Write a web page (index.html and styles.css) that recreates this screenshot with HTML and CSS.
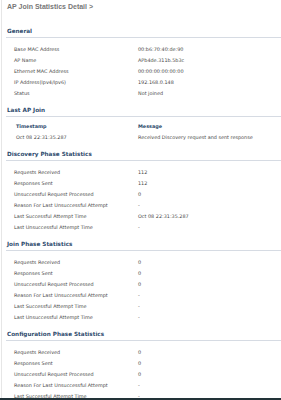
FILE: index.html
```html
<!DOCTYPE html>
<html lang="en">
<head>
  <meta charset="UTF-8" />
  <meta name="viewport" content="width=device-width, initial-scale=1.0"/>
  <title>AP Join Statistics Detail</title>
  <link rel="stylesheet" href="styles.css">
</head>
<body>
  <div class="page">
    <h1 class="page-title">AP Join Statistics Detail &gt;</h1>

    <div class="section section-first">
      <h2>General</h2>
      <div class="rows">
        <div class="row"><span>Base MAC Address</span><span>00:b6:70:40:de:90</span></div>
        <div class="row"><span>AP Name</span><span>APb4de.311b.5b3c</span></div>
        <div class="row"><span>Ethernet MAC Address</span><span>00:00:00:00:00:00</span></div>
        <div class="row"><span>IP Address(Ipv4/Ipv6)</span><span>192.168.0.148</span></div>
        <div class="row"><span>Status</span><span>Not joined</span></div>
      </div>
    </div>

    <div class="section">
      <h2>Last AP Join</h2>
      <div class="join-table">
        <div class="row join-head"><span>Timestamp</span><span>Message</span></div>
        <div class="row join-row"><span>Oct 08 22:31:35.287</span><span>Received Discovery request and sent response</span></div>
      </div>
    </div>

    <div class="section">
      <h2>Discovery Phase Statistics</h2>
      <div class="rows">
        <div class="row"><span>Requests Received</span><span>112</span></div>
        <div class="row"><span>Responses Sent</span><span>112</span></div>
        <div class="row"><span>Unsuccessful Request Processed</span><span>0</span></div>
        <div class="row"><span>Reason For Last Unsuccessful Attempt</span><span>-</span></div>
        <div class="row"><span>Last Successful Attempt Time</span><span>Oct 08 22:31:35.287</span></div>
        <div class="row"><span>Last Unsuccessful Attempt Time</span><span>-</span></div>
      </div>
    </div>

    <div class="section">
      <h2>Join Phase Statistics</h2>
      <div class="rows">
        <div class="row"><span>Requests Received</span><span>0</span></div>
        <div class="row"><span>Responses Sent</span><span>0</span></div>
        <div class="row"><span>Unsuccessful Request Processed</span><span>0</span></div>
        <div class="row"><span>Reason For Last Unsuccessful Attempt</span><span>-</span></div>
        <div class="row"><span>Last Successful Attempt Time</span><span>-</span></div>
        <div class="row"><span>Last Unsuccessful Attempt Time</span><span>-</span></div>
      </div>
    </div>

    <div class="section">
      <h2>Configuration Phase Statistics</h2>
      <div class="rows">
        <div class="row"><span>Requests Received</span><span>0</span></div>
        <div class="row"><span>Responses Sent</span><span>0</span></div>
        <div class="row"><span>Unsuccessful Request Processed</span><span>0</span></div>
        <div class="row"><span>Reason For Last Unsuccessful Attempt</span><span>-</span></div>
        <div class="row"><span>Last Successful Attempt Time</span><span>-</span></div>
        <div class="row"><span>Last Unsuccessful Attempt Time</span><span>-</span></div>
      </div>
    </div>
  </div>

  <div class="footer-bar"></div>
</body>
</html>
```

FILE: styles.css
```css
body {
  margin: 0;
  background: #fff;
  font-family: "DejaVu Sans", Verdana, sans-serif;
  font-size: 4.9px;
  color: #4a4a4a;
}

.page {
  border-left: 1px solid #e6e6e6;
  margin-left: 1px;
  padding-left: 4px;
  min-height: 400px;
  box-sizing: border-box;
}

.page-title {
  font-family: "Liberation Sans", Arial, sans-serif;
  font-size: 7px;
  font-weight: bold;
  color: #777;
  line-height: 10px;
  margin: 0;
  padding: 2px 0 0 1px;
}

.section {
  margin-top: 6px;
}

.section-first {
  margin-top: 14px;
}

.section h2 {
  font-size: 5.7px;
  font-weight: bold;
  color: #2e4b6d;
  line-height: 10px;
  margin: 0;
  padding: 0 0 1px 1px;
  border-bottom: 1px solid #d6dbe3;
}

.rows {
  margin-top: 6px;
}

.row {
  display: grid;
  grid-template-columns: 124px 1fr;
  height: 11px;
  line-height: 11px;
  padding-left: 8px;
  white-space: nowrap;
}

.join-table {
  margin-top: 4px;
}

.join-head,
.join-row {
  grid-template-columns: 122px 1fr;
  padding-left: 10px;
}

.join-head {
  font-weight: bold;
  color: #2e4b6d;
}

.footer-bar {
  position: fixed;
  left: 0;
  right: 0;
  bottom: 0;
  height: 2px;
  background: #223238;
}
```
